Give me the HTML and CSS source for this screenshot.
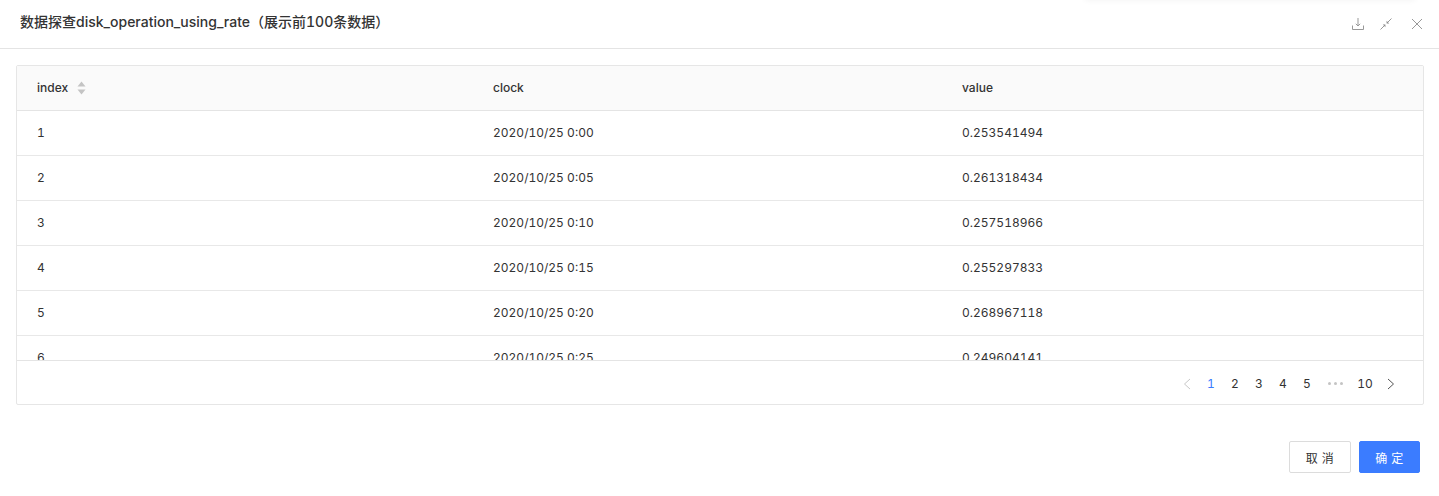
FILE: index.html
```html
<!DOCTYPE html>
<html lang="zh">
<head>
<meta charset="utf-8">
<title>数据探查</title>
<link rel="stylesheet" href="styles.css">
</head>
<body>
<div class="top-shade"></div>
<header class="head">
  <h1 class="title">数据探查disk_operation_using_rate（展示前100条数据）</h1>
  <div class="tools">
    <svg class="tool" width="14" height="14" viewBox="0 0 14 14"><path d="M7 1V9M4.8 6.8L7 9L9.2 6.8M1.5 8.5V12.5H12.5V8.5" fill="none" stroke="#999" stroke-width="1"/></svg>
    <svg class="tool tool-mid" width="14" height="14" viewBox="0 0 14 14"><path d="M1.5 12.5L5 9M9 5L12.5 1.5" fill="none" stroke="#999" stroke-width="1"/><path d="M3.8 7.6L6.4 7.6L6.4 10.2Z M7.6 3.8L7.6 6.4L10.2 6.4Z" fill="#888"/></svg>
    <svg class="tool" width="14" height="14" viewBox="0 0 14 14"><path d="M2 2L12 12M12 2L2 12" fill="none" stroke="#999" stroke-width="1"/></svg>
  </div>
</header>
<main class="body">
  <section class="table">
    <div class="row row-head">
      <div class="cell">index
        <span class="sorter">
          <svg width="9" height="14" viewBox="0 0 9 14"><path d="M4.5 0.5L8.5 5.5H0.5Z M4.5 13.5L0.5 8.5H8.5Z" fill="#c4c4c4"/></svg>
        </span>
      </div>
      <div class="cell">clock</div>
      <div class="cell">value</div>
    </div>
    <div class="scroll">
      <div class="row"><div class="cell">1</div><div class="cell">2020/10/25 0:00</div><div class="cell">0.253541494</div></div>
      <div class="row"><div class="cell">2</div><div class="cell">2020/10/25 0:05</div><div class="cell">0.261318434</div></div>
      <div class="row"><div class="cell">3</div><div class="cell">2020/10/25 0:10</div><div class="cell">0.257518966</div></div>
      <div class="row"><div class="cell">4</div><div class="cell">2020/10/25 0:15</div><div class="cell">0.255297833</div></div>
      <div class="row"><div class="cell">5</div><div class="cell">2020/10/25 0:20</div><div class="cell">0.268967118</div></div>
      <div class="row"><div class="cell">6</div><div class="cell">2020/10/25 0:25</div><div class="cell">0.249604141</div></div>
    </div>
    <nav class="pager">
      <span class="pg arrow"><svg width="10" height="12" viewBox="0 0 10 12"><path d="M8 1L2.5 6L8 11" fill="none" stroke="#c8c8c8" stroke-width="1"/></svg></span>
      <span class="pg active">1</span>
      <span class="pg">2</span>
      <span class="pg">3</span>
      <span class="pg">4</span>
      <span class="pg">5</span>
      <span class="pg dots"><i class="dot"></i><i class="dot"></i><i class="dot"></i></span>
      <span class="pg wide">10</span>
      <span class="pg arrow"><svg width="10" height="12" viewBox="0 0 10 12"><path d="M2 1L7.5 6L2 11" fill="none" stroke="#555" stroke-width="1"/></svg></span>
    </nav>
  </section>
</main>
<footer class="foot">
  <button class="btn">取 消</button>
  <button class="btn primary">确 定</button>
</footer>
</body>
</html>
```
FILE: styles.css
```css
* { box-sizing: border-box; }
html, body { margin: 0; padding: 0; }
body {
  width: 1439px;
  height: 496px;
  overflow: hidden;
  background: #fff;
  color: #333;
  font-family: Inter, "Noto Sans CJK SC", sans-serif;
  font-size: 12px;
  font-variant-numeric: tabular-nums;
  position: relative;
}
.top-shade {
  position: absolute;
  left: 1085px;
  top: -6px;
  width: 330px;
  height: 6px;
  box-shadow: 0 0 6px rgba(0, 0, 0, 0.06);
}
.head {
  height: 49px;
  border-bottom: 1px solid #e4e4e4;
  display: flex;
  align-items: center;
  justify-content: space-between;
  padding: 0 15px 4px 20px;
}
.title {
  margin: 0;
  font-size: 14px;
  font-weight: 500;
  line-height: 20px;
  color: #333;
}
.tools { display: flex; gap: 14px; padding-top: 4px; }
.tool { display: block; }
.tool-mid { margin-right: 3px; }
.body { padding: 16px 15px 0 16px; }
.table {
  height: 340px;
  border: 1px solid #e6e6e6;
  border-radius: 2px;
  display: flex;
  flex-direction: column;
}
.row {
  display: grid;
  grid-template-columns: 456px 469px 1fr;
  height: 45px;
  flex: none;
  border-bottom: 1px solid #e8e8e8;
  align-items: center;
}
.row-head {
  background: #fafafa;
  font-weight: 500;
  height: 45px;
  border-bottom-color: #e4e4e4;
}
.cell { padding: 0 20px; line-height: 18px; display: flex; align-items: center; }
.sorter { display: inline-flex; margin-left: 9px; }
.scroll { height: 249px; overflow: hidden; flex: none; }
.pager {
  border-top: 1px solid #e4e4e4;
  flex: 1;
  display: flex;
  align-items: center;
  justify-content: flex-end;
  padding: 3px 20px 0 0;
}
.pg {
  width: 24px;
  text-align: center;
  line-height: 16px;
  color: #333;
  display: flex;
  justify-content: center;
  align-items: center;
}
.active { color: #3b7cff; }
.wide { width: 28px; }
.dots { width: 32px; gap: 3px; padding-bottom: 2px; }
.dot { width: 3px; height: 3px; border-radius: 50%; background: #c4c4c4; }
.foot {
  display: flex;
  justify-content: flex-end;
  gap: 8px;
  padding: 36px 19px 0 0;
}
.btn {
  width: 62px;
  height: 32px;
  border: 1px solid #dcdcdc;
  border-radius: 2px;
  background: #fff;
  color: #333;
  font: 12px Inter, "Noto Sans CJK SC", sans-serif;
  letter-spacing: 0.3px;
  padding: 0;
}
.primary {
  width: 61px;
  background: #3b7cff;
  border-color: #3b7cff;
  color: #fff;
}
```
